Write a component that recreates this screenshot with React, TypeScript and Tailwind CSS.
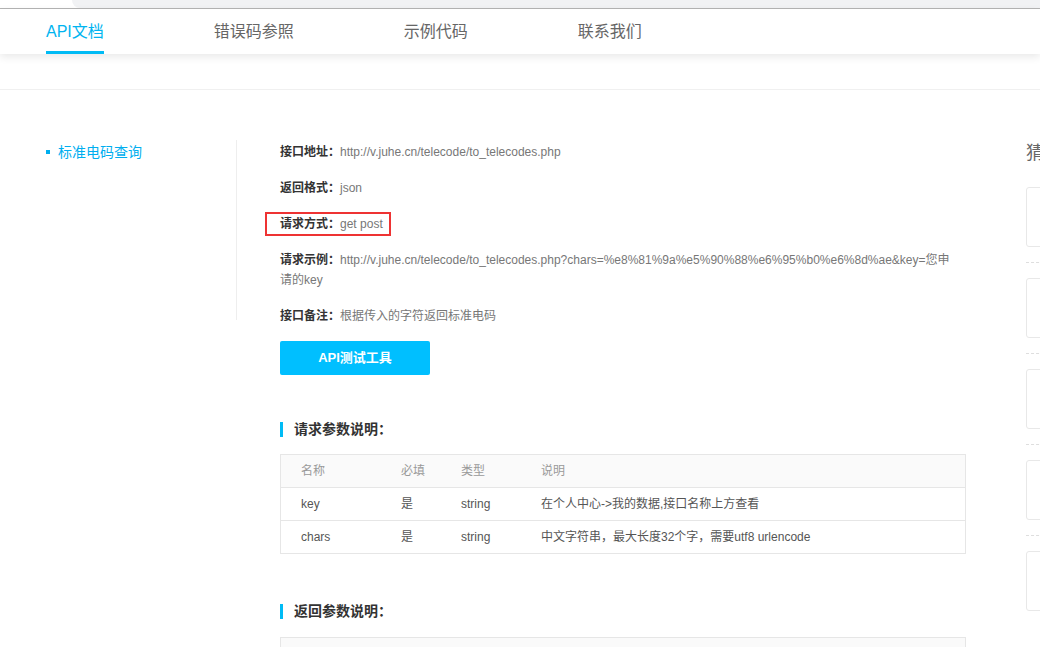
import React from 'react';

const font = { fontFamily: '"Liberation Sans", "Noto Sans CJK SC", sans-serif' };

const tabs = ['API文档', '错误码参照', '示例代码', '联系我们'];

const infoRows: { label: string; value: React.ReactNode; marked?: boolean }[] = [
  { label: '接口地址：', value: 'http://v.juhe.cn/telecode/to_telecodes.php' },
  { label: '返回格式：', value: 'json' },
  { label: '请求方式：', value: 'get post', marked: true },
  {
    label: '请求示例：',
    value: (
      <>
        http://v.juhe.cn/telecode/to_telecodes.php?chars=%e8%81%9a%e5%90%88%e6%95%b0%e6%8d%ae&amp;key=您申
        <br />
        请的key
      </>
    ),
  },
  { label: '接口备注：', value: '根据传入的字符返回标准电码' },
];

const params = [
  { name: 'key', required: '是', type: 'string', desc: '在个人中心->我的数据,接口名称上方查看' },
  { name: 'chars', required: '是', type: 'string', desc: '中文字符串，最大长度32个字，需要utf8 urlencode' },
];

const TopBar: React.FC = () => (
  <div className="h-[8px] bg-white flex border-b border-[#b4b4b4] box-content">
    <div className="ml-[72px] flex-1 bg-[#f1f2f4] rounded-bl-[14px]" />
  </div>
);

const NavBar: React.FC = () => (
  <div className="relative z-10 bg-white shadow-[0_3px_8px_rgba(0,0,0,0.09)]">
    <nav className="flex h-[45px] pl-[46px] gap-[110px]">
      {tabs.map((t, i) => (
        <div
          key={t}
          className={`flex items-center pt-[4px] border-b-[3px] text-[16px] ${
            i === 0 ? 'border-[#00bbf5] text-[#00b4f0]' : 'border-transparent text-[#666]'
          }`}
        >
          {t}
        </div>
      ))}
    </nav>
  </div>
);

const SectionTitle: React.FC<{ title: string }> = ({ title }) => (
  <div className="flex items-center h-[20px]">
    <span className="w-[3px] h-[15px] bg-[#00bbf5]" />
    <span className="ml-[11px] text-[14px] font-bold text-[#333]">{title}</span>
  </div>
);

const ParamTable: React.FC = () => (
  <div className="border border-[#e6e6e6] text-[12px]">
    <div className="flex h-[32px] items-center bg-[#fafafa] text-[#999]">
      <span className="w-[100px] pl-[20px]">名称</span>
      <span className="w-[60px] pl-[20px]">必填</span>
      <span className="w-[80px] pl-[20px]">类型</span>
      <span className="flex-1 pl-[20px]">说明</span>
    </div>
    {params.map(p => (
      <div key={p.name} className="flex h-[33px] items-center border-t border-[#e6e6e6] text-[#555]">
        <span className="w-[100px] pl-[20px]">{p.name}</span>
        <span className="w-[60px] pl-[20px]">{p.required}</span>
        <span className="w-[80px] pl-[20px]">{p.type}</span>
        <span className="flex-1 pl-[20px]">{p.desc}</span>
      </div>
    ))}
  </div>
);

const RightColumn: React.FC = () => (
  <div className="ml-[60px] w-[260px] shrink-0">
    <div className="text-[18px] leading-[20px] text-[#666] pt-[1px]">猜你喜欢</div>
    <div className="mt-[24px]">
      {[0, 1, 2, 3, 4].map(i => (
        <div key={i}>
          {i > 0 && <div className="my-[15px] border-t border-dashed border-[#dedede]" />}
          <div className="h-[60px] border border-[#e8e8e8] rounded-[3px]" />
        </div>
      ))}
    </div>
  </div>
);

export default function App() {
  return (
    <div className="w-[1040px] h-[647px] overflow-hidden bg-white" style={font}>
      <TopBar />
      <NavBar />
      <div className="h-[36px] border-b border-[#f0f0f0]" />

      <div className="flex pt-[52px]">
        {/* Sidebar */}
        <div className="w-[237px] shrink-0 pl-[46px] border-r border-[#eeeeee] h-[180px] -mt-[2px]">
          <div className="flex items-center h-[20px] mt-[2px] text-[14px] text-[#00aeef]">
            <span className="w-[4px] h-[4px] bg-[#00aeef]" />
            <span className="ml-[8px]">标准电码查询</span>
          </div>
        </div>

        {/* Main content */}
        <div className="ml-[43px] w-[686px] shrink-0 text-[12px] leading-[20px]">
          {infoRows.map((r, i) =>
            r.marked ? (
              <div
                key={r.label}
                className="w-fit -ml-[15px] -my-[2px] mb-[14px] border-2 border-[#ee3333] pl-[13px] pr-[6px]"
              >
                <span className="font-bold text-[#333]">{r.label}</span>
                <span className="text-[#777]">{r.value}</span>
              </div>
            ) : (
              <div key={r.label} className={i === infoRows.length - 1 ? 'mb-[15px]' : 'mb-[16px]'}>
                <span className="font-bold text-[#333]">{r.label}</span>
                <span className="text-[#777]">{r.value}</span>
              </div>
            )
          )}

          <button className="w-[150px] h-[34px] bg-[#00bfff] rounded-[2px] text-white text-[13px] font-bold">
            API测试工具
          </button>

          <div className="mt-[44px]">
            <SectionTitle title="请求参数说明：" />
          </div>
          <div className="mt-[15px]">
            <ParamTable />
          </div>

          <div className="mt-[47px]">
            <SectionTitle title="返回参数说明：" />
          </div>
          <div className="mt-[16px] h-[40px] border border-[#e6e6e6] bg-[#fafafa]" />
        </div>

        <RightColumn />
      </div>
    </div>
  );
}
